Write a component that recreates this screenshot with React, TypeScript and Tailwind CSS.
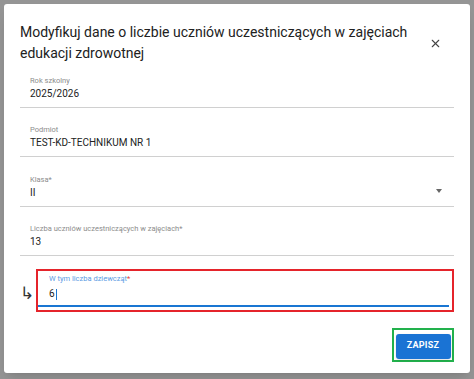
import { X } from "lucide-react"

function Field({ label, value, required, select }: { label: string; value: string; required?: boolean; select?: boolean }) {
  return (
    <div className="relative flex flex-col border-b border-[#d0d0d0] px-[10px] pt-[6px] pb-[6px]">
      <span className="text-[7.5px] leading-[10px] text-[#8c8c8c]">
        {label}
        {required && "*"}
      </span>
      <span className="mt-[1px] text-[10px] leading-[14px] text-[#222]">{value}</span>
      {select && (
        <span className="absolute right-[12px] top-[20px] h-0 w-0 border-x-[3.5px] border-t-[4px] border-x-transparent border-t-[#666]" />
      )}
    </div>
  )
}

export default function App() {
  return (
    <div className="flex h-[379px] w-[474px] bg-[#959595] p-1 font-['Roboto',sans-serif]">
      <div className="flex h-[369px] w-[466px] flex-col rounded-[3px] bg-white px-4 pt-[18px] pb-[11px] shadow-lg">
        <div className="flex items-center">
          <h1 className="w-[400px] text-[14px] leading-[21px] font-normal text-[#212121]">
            Modyfikuj dane o liczbie uczniów uczestniczących w zajęciach edukacji zdrowotnej
          </h1>
          <div className="flex flex-1 justify-end pr-[12px]">
            <X className="h-[13px] w-[13px] text-[#444]" strokeWidth={2} />
          </div>
        </div>

        <div className="mt-[5.5px] flex flex-col gap-[11.5px]">
          <Field label="Rok szkolny" value="2025/2026" />
          <Field label="Podmiot" value="TEST-KD-TECHNIKUM NR 1" />
          <Field label="Klasa" value="II" required select />
          <Field label="Liczba uczniów uczestniczących w zajęciach" value="13" required />
        </div>

        <div className="mt-[13px] flex items-center">
          <span className="w-[16px] pt-[6px] text-[17px] leading-none text-[#333]">↳</span>
          <div className="flex-1 border-2 border-[#e5242b] pr-[3px] pb-[3px]">
            <div className="flex flex-col border-b-2 border-[#1976d2] pl-[11px] pt-[3px] pb-[4px]">
              <span className="text-[7.5px] leading-[10px] text-[#5b9be3]">
                W tym liczba dziewcząt<span className="text-[#e53935]">*</span>
              </span>
              <span className="mt-[3px] flex items-center text-[10px] leading-[14px] text-[#222]">
                6<span className="ml-[1px] inline-block h-[11px] w-px bg-[#1976d2]" />
              </span>
            </div>
          </div>
        </div>

        <div className="mt-auto flex justify-end">
          <div className="border-2 border-[#22b14c] p-[1.5px]">
            <button className="h-[25px] w-[55px] rounded-[3px] bg-[#1a73d4] text-[9px] font-bold tracking-wide text-white shadow">
              ZAPISZ
            </button>
          </div>
        </div>
      </div>
    </div>
  )
}
